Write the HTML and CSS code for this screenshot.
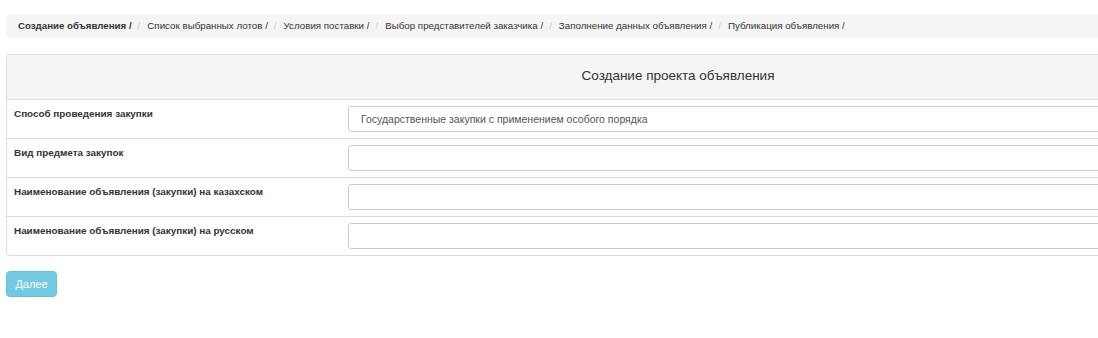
FILE: index.html
```html
<!DOCTYPE html>
<html lang="ru">
<head>
  <meta charset="UTF-8" />
  <meta name="viewport" content="width=device-width, initial-scale=1.0">
  <title>Создание объявления</title>
  <link rel="stylesheet" href="styles.css">
</head>
<body>
<div class="page">
  <ul class="breadcrumb">
    <li class="active">Создание объявления /</li>
    <li>Список выбранных лотов /</li>
    <li>Условия поставки /</li>
    <li>Выбор представителей заказчика /</li>
    <li>Заполнение данных объявления /</li>
    <li>Публикация объявления /</li>
  </ul>

  <div class="panel">
    <div class="panel-heading">Создание проекта объявления</div>
    <div class="form-row">
      <label class="form-label">Способ проведения закупки</label>
      <div class="form-field">
        <div class="form-control">Государственные закупки с применением особого порядка</div>
      </div>
    </div>
    <div class="form-row">
      <label class="form-label">Вид предмета закупок</label>
      <div class="form-field"><div class="form-control"></div></div>
    </div>
    <div class="form-row">
      <label class="form-label">Наименование объявления (закупки) на казахском</label>
      <div class="form-field"><div class="form-control"></div></div>
    </div>
    <div class="form-row">
      <label class="form-label">Наименование объявления (закупки) на русском</label>
      <div class="form-field"><div class="form-control"></div></div>
    </div>
  </div>

  <button class="btn-info" disabled>Далее</button>
</div>
</body>
</html>
```

FILE: styles.css
```css
body {
  margin: 0;
  font-family: "Liberation Sans", Arial, sans-serif;
  color: #333;
  background: #fff;
  overflow: hidden;
}
.page {
  padding: 14px 0 0 6px;
  width: 1344px;
}
.breadcrumb {
  list-style: none;
  margin: 0 0 16px;
  padding: 5px 12px;
  height: 14px;
  background: #f5f5f5;
  border-radius: 4px;
  display: flex;
  font-size: 9.75px;
  line-height: 14px;
  color: #333;
}
.breadcrumb li + li::before {
  content: "/";
  color: #ccc;
  padding: 0 7px 0 6px;
}
.breadcrumb .active {
  font-weight: bold;
  font-size: 9.7px;
}
.panel {
  border: 1px solid #ddd;
  border-radius: 4px;
  overflow: hidden;
}
.panel-heading {
  background: #f5f5f5;
  height: 44px;
  line-height: 42px;
  text-align: center;
  font-size: 13.5px;
  color: #333;
}
.form-row {
  display: flex;
  border-top: 1px solid #ddd;
  height: 38px;
}
.form-label {
  width: 334px;
  padding: 7px 0 0 7px;
  font-size: 9.9px;
  font-weight: bold;
  line-height: 14px;
  box-sizing: border-box;
}
.form-field {
  flex: 1;
  padding: 6px 0 0 7px;
}
.form-control {
  height: 24px;
  border: 1px solid #ccc;
  border-radius: 3px;
  padding: 0 12px;
  font-size: 10.5px;
  line-height: 25px;
  color: #555;
  background: #fff;
}
.btn-info {
  margin-top: 15px;
  width: 51px;
  height: 26px;
  border: 1px solid #46b8da;
  border-radius: 4px;
  background: #5bc0de;
  color: #fff;
  font-family: "Liberation Sans", Arial, sans-serif;
  font-size: 11px;
  opacity: 0.85;
  padding: 0;
}
```
